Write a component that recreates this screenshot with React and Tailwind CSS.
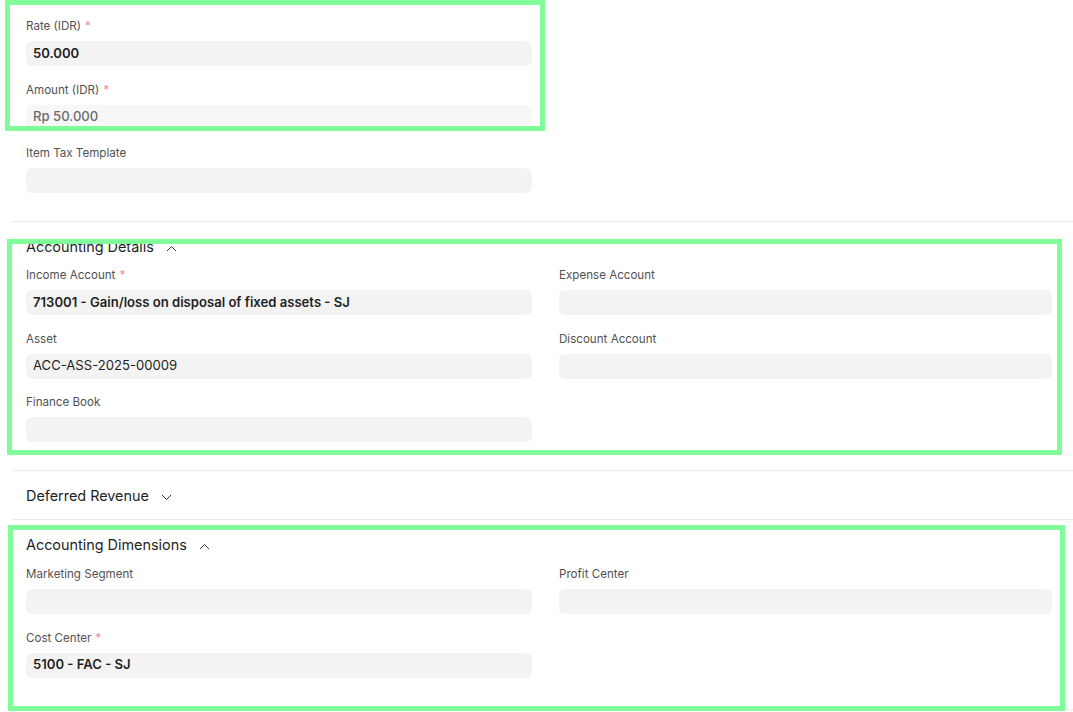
import React from "react";

const Chevron = ({ up }) => (
  <svg width="11" height="7" viewBox="0 0 11 7" className="ml-[12px] mt-[3px]">
    <polyline
      points={up ? "1,6 5.5,1.5 10,6" : "1,1 5.5,5.5 10,1"}
      fill="none"
      stroke="#333"
      strokeWidth="1"
    />
  </svg>
);

const Field = ({ label, required, value, bold = true, muted, light }) => (
  <div className="mb-[14.5px]">
    <div className="h-4 pt-[1px] mb-2 text-[11.6px] leading-4 text-[#525252]">
      {label}
      {required && <span className="ml-1 text-[#ef8f8f]">*</span>}
    </div>
    <div
      className={`h-[25px] rounded-md px-[7px] flex items-center text-[13.1px] ${
        light ? "bg-[#f7f7f7]" : "bg-[#f3f3f3]"
      } ${muted ? "text-[#6b6b6b] font-medium" : "text-[#1f1f1f]"} ${
        bold && !muted ? "font-semibold" : ""
      }`}
    >
      {value}
    </div>
  </div>
);

const Header = ({ title, up }) => (
  <div className="flex items-center h-5 text-[14.4px] text-[#1f1f1f]">
    {title}
    <Chevron up={up} />
  </div>
);

const App = () => {
  return (
    <div className="relative w-[1073px] h-[712px] overflow-hidden bg-white font-['Inter','Liberation_Sans',sans-serif]">
      <div className="ml-3">
        {/* Rate / amount */}
        <div className="pl-[14px] pt-[17px] pb-[13.5px] border-b border-[#ebebeb]">
          <div className="w-[506px]">
            <Field label="Rate (IDR)" required value="50.000" />
            <Field label="Amount (IDR)" required value="Rp 50.000" muted light />
            <Field label="Item Tax Template" value="" />
          </div>
        </div>

        {/* Accounting Details */}
        <div className="pl-[14px] pt-[15px] pb-[13.5px] border-b border-[#ebebeb]">
          <Header title="Accounting Details" up />
          <div className="mt-[9px] grid grid-cols-[506px_493px] gap-x-[27px]">
            <div>
              <Field
                label="Income Account"
                required
                value="713001 - Gain/loss on disposal of fixed assets - SJ"
              />
              <Field label="Asset" value="ACC-ASS-2025-00009" bold={false} />
              <Field label="Finance Book" value="" />
            </div>
            <div>
              <Field label="Expense Account" value="" />
              <Field label="Discount Account" value="" />
            </div>
          </div>
        </div>

        {/* Deferred Revenue */}
        <div className="pl-[14px] pt-[15px] pb-[13px] border-b border-[#ebebeb]">
          <Header title="Deferred Revenue" />
        </div>

        {/* Accounting Dimensions */}
        <div className="pl-[14px] pt-[15px] pb-[17px] border-b border-[#ebebeb]">
          <Header title="Accounting Dimensions" up />
          <div className="mt-[10px] grid grid-cols-[506px_493px] gap-x-[27px]">
            <div>
              <Field label="Marketing Segment" value="" />
              <Field label="Cost Center" required value="5100 - FAC - SJ" />
            </div>
            <div>
              <Field label="Profit Center" value="" />
            </div>
          </div>
        </div>
      </div>

      {/* highlight boxes */}
      <div className="absolute left-[5px] top-0 w-[540px] h-[131px] border-[5px] border-[#80fc9a]" />
      <div className="absolute left-[7px] top-[239px] w-[1055px] h-[216px] border-[5px] border-[#80fc9a]" />
      <div className="absolute left-[8px] top-[525px] w-[1057px] h-[186px] border-[5px] border-[#80fc9a]" />
    </div>
  );
};

export default App;
